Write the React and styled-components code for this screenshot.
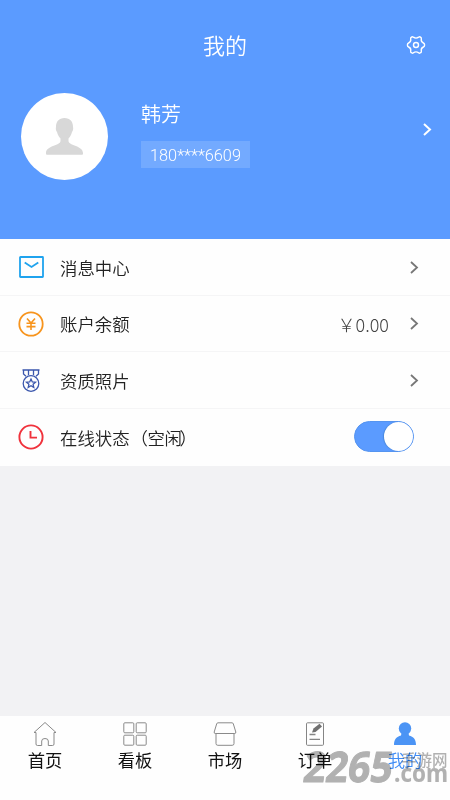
import React from "react";
import styled, { createGlobalStyle } from "styled-components";

const Global = createGlobalStyle`
  * { box-sizing: border-box; }
  body { margin: 0; background: #f2f2f4; }
`;

const Page = styled.div`
  position: relative;
  width: 450px;
  height: 800px;
  overflow: hidden;
  display: flex;
  flex-direction: column;
  background: #f2f2f4;
  color: #222;
  font-family: "Noto Sans CJK SC", sans-serif;
  font-weight: 350;
`;

const Hero = styled.header`
  height: 239px;
  background: #5b9bff;
  color: #fff;
`;

const TitleBar = styled.div`
  height: 93px;
  padding: 0 24px;
  display: grid;
  grid-template-columns: 20px 1fr 20px;
  align-items: center;
  & > svg { grid-column: 3; margin-top: -3px; }
`;

const Title = styled.h1`
  grid-column: 2;
  margin: -5px 0 0;
  text-align: center;
  font-size: 22px;
  font-weight: 350;
  line-height: 30px;
`;

const Profile = styled.div`
  display: flex;
  align-items: flex-start;
  padding: 0 19px 0 21px;
`;

const Avatar = styled.div`
  width: 87px;
  height: 87px;
  border-radius: 50%;
  background: #fff;
  display: flex;
  align-items: center;
  justify-content: center;
`;

const Identity = styled.div`
  flex: 1;
  margin-left: 33px;
  padding-top: 6px;
  display: flex;
  flex-direction: column;
  align-items: flex-start;
`;

const Name = styled.div`
  font-size: 20px;
  line-height: 30px;
`;

const Phone = styled.div`
  width: 109px;
  height: 27px;
  margin-top: 12px;
  background: #73aaff;
  text-align: center;
  font-family: Roboto, sans-serif;
  font-weight: 350;
  font-size: 16.3px;
  line-height: 30px;
`;

const HeroArrow = styled.div`
  padding-top: 30px;
  display: flex;
`;

const Menu = styled.main`
  background: #fefefe;
  height: 227px;
`;

const Row = styled.div`
  height: 56.6px;
  display: flex;
  align-items: center;
  padding: 1px 32px 0 18px;
  border-bottom: 1px solid ${(p) => (p.$last ? "transparent" : "#f5f5f6")};
`;

const IconSlot = styled.span`
  width: 26px;
  display: flex;
  justify-content: center;
`;

const Label = styled.span`
  flex: 1;
  margin-left: 16px;
  font-size: 17.4px;
  line-height: 26px;
  padding-top: 1px;
`;

const Note = styled.span`
  margin-left: 1px;
  letter-spacing: -0.4px;
`;

const NoteEnd = styled.span`
  margin-left: -2px;
`;

const Amount = styled.span`
  margin-right: 21px;
  font-size: 18px;
  font-weight: 300;
  line-height: 26px;
  color: #444;
`;

const Switch = styled.span`
  width: 60px;
  height: 31px;
  margin: -2px 4px 0 0;
  border-radius: 16px;
  background: #5b9bff;
  border: 1px solid #5594f0;
  display: flex;
  justify-content: flex-end;
`;

const Knob = styled.span`
  width: 29px;
  height: 29px;
  border-radius: 50%;
  background: #fff;
  box-shadow: -1px 0 1px #4a88de;
`;

const TabBar = styled.nav`
  margin-top: auto;
  height: 84px;
  background: #fefefe;
  display: grid;
  grid-template-columns: repeat(5, 1fr);
`;

const Tab = styled.div`
  display: flex;
  flex-direction: column;
  align-items: center;
  padding-top: 5px;
  color: ${(p) => (p.$active ? "#3f8cf5" : "#111")};
  font-size: 17.3px;
  font-weight: ${(p) => (p.$active ? 350 : 400)};
  line-height: 25px;
`;

const Watermark = styled.svg`
  position: absolute;
  left: 295px;
  top: 740px;
  pointer-events: none;
  mix-blend-mode: multiply;
`;

const Stroke = styled.svg`
  display: block;
  overflow: visible;
  fill: none;
  stroke: ${(p) => p.$color};
  stroke-width: ${(p) => p.$weight || 1};
`;

const Chevron = ({ color, weight = 1.8 }) => (
  <Stroke width="8" height="13" viewBox="0 0 8 13" $color={color} $weight={weight}>
    <path d="M1 1 L7 6.5 L1 12" />
  </Stroke>
);

const Gear = () => (
  <Stroke width="20" height="20" viewBox="0 0 20 20" $color="#fff" $weight={1.4} strokeLinejoin="round">
    <path d="M5.2 2.4 Q6.2 1.4 7.3 2.2 Q10 4 12.7 2.2 Q13.8 1.4 14.8 2.4 Q15.6 3 15.3 4.2 Q14.8 6.9 17.4 8 Q18.6 8.5 18.6 10 Q18.6 11.5 17.4 12 Q14.8 13.1 15.3 15.8 Q15.6 17 14.8 17.6 Q13.8 18.6 12.7 17.8 Q10 16 7.3 17.8 Q6.2 18.6 5.2 17.6 Q4.4 17 4.7 15.8 Q5.2 13.1 2.6 12 Q1.4 11.5 1.4 10 Q1.4 8.5 2.6 8 Q5.2 6.9 4.7 4.2 Q4.4 3 5.2 2.4 Z" />
    <circle cx="10" cy="10" r="2.5" />
  </Stroke>
);

const AvatarShape = () => (
  <svg width="37" height="37" viewBox="0 0 37 37" fill="#d8d8d8">
    <path d="M18.5 0 C13 0 9.8 3.8 10 9 C9.5 10.5 10 13 11 14 C11.7 17 13 19 14.5 20.5 V23 C14 28 0 27.5 0 35 V36 Q0 36.8 1 36.8 H36 Q37 36.8 37 36 V35 C37 27.5 23 28 22.5 23 V20.5 C24 19 25.3 17 26 14 C27 13 27.5 10.5 27 9 C27.2 3.8 24 0 18.5 0 Z" />
  </svg>
);

const Mail = () => (
  <Stroke width="25" height="22" viewBox="0 0 25 22" $color="#1fa3ee" $weight={1.8}>
    <rect x="1" y="1" width="23" height="20" rx=".5" />
    <path d="M5.7 6.5 L12.5 11 L19.3 6.5" />
  </Stroke>
);

const Coin = () => (
  <Stroke width="26" height="26" viewBox="0 0 26 26" $color="#f7941d" $weight={1.8}>
    <circle cx="13" cy="13" r="11.7" />
    <path d="M9 7.5 L13 12 L17 7.5 M13 12 V19 M8.5 12.3 H17.5 M8.5 15.6 H17.5" strokeWidth="1.6" />
  </Stroke>
);

const Medal = () => (
  <Stroke width="18" height="23" viewBox="0 0 18 23" $color="#3b57ad" $weight={1.3}>
    <path d="M.5 1 H17.5 M1.5 1 V5 L4 7.2 M16.5 1 V5 L14 7.2 M6.5 1 V6 M11.5 1 V6" />
    <circle cx="9" cy="14.5" r="7.8" />
    <path d="M9 10 L10.3 12.9 L13.5 13.2 L11.1 15.3 L11.8 18.4 L9 16.8 L6.2 18.4 L6.9 15.3 L4.5 13.2 L7.7 12.9 Z" />
  </Stroke>
);

const Clock = () => (
  <Stroke width="26" height="26" viewBox="0 0 26 26" $color="#f0323c" $weight={1.9}>
    <circle cx="13" cy="13" r="11.6" />
    <path d="M12.5 7 V13.6 H19" />
  </Stroke>
);

const Home = () => (
  <Stroke width="26" height="26" viewBox="0 0 26 26" $color="#8a8a8a">
    <path d="M4 11.5 H2 L13 1.5 L24 11.5 H22 V23 Q22 24.5 20.5 24.5 H16.3 V20 Q16.3 17.5 13 17.5 Q9.7 17.5 9.7 20 V24.5 H5.5 Q4 24.5 4 23 Z" />
  </Stroke>
);

const Grid = () => (
  <Stroke width="26" height="26" viewBox="0 0 26 26" $color="#8a8a8a">
    <rect x="1.8" y="1.8" width="10" height="10" rx="1" />
    <rect x="14.2" y="1.8" width="10" height="10" rx="1" />
    <rect x="1.8" y="14.2" width="10" height="10" rx="1" />
    <rect x="14.2" y="14.2" width="10" height="10" rx="1" />
  </Stroke>
);

const Shop = () => (
  <Stroke width="26" height="26" viewBox="0 0 26 26" $color="#8a8a8a">
    <path d="M6 1.8 H20 Q21 1.8 21.3 2.8 L23.8 11 Q24 12.5 22.8 12.5 H3.2 Q2 12.5 2.2 11 L4.7 2.8 Q5 1.8 6 1.8 Z M4 12.5 V22.5 Q4 24.3 5.8 24.3 H20.2 Q22 24.3 22 22.5 V12.5" />
  </Stroke>
);

const Order = () => (
  <Stroke width="26" height="26" viewBox="0 0 26 26" $color="#858585">
    <rect x="4.5" y="1.8" width="17" height="22.5" rx="1" />
    <path d="M7.5 13.5 H13.5 M7.5 18.3 H18" strokeWidth="1.3" />
    <path d="M10 11.5 L11.5 7.5 L17.5 2.8 L20 5.6 L13.5 11 Z" fill="#707070" stroke="none" />
  </Stroke>
);

const Person = () => (
  <svg width="26" height="26" viewBox="0 0 26 26" fill="#4b94f5">
    <circle cx="13" cy="7.5" r="6.2" />
    <path d="M9.5 12 H16.5 L17 14.5 C21.5 15.5 24 18.5 24 24 H2 C2 18.5 4.5 15.5 9 14.5 Z" />
  </svg>
);

const rows = [
  { label: "消息中心", icon: Mail },
  { label: "账户余额", icon: Coin, amount: "￥0.00" },
  { label: "资质照片", icon: Medal },
  { label: "在线状态", note: "空闲", icon: Clock, toggle: true },
];

const tabs = [
  { label: "首页", icon: Home },
  { label: "看板", icon: Grid },
  { label: "市场", icon: Shop },
  { label: "订单", icon: Order },
  { label: "我的", icon: Person, active: true },
];

export default function App() {
  return (
    <Page>
      <Global />
      <Hero>
        <TitleBar>
          <Title>我的</Title>
          <Gear />
        </TitleBar>
        <Profile>
          <Avatar><AvatarShape /></Avatar>
          <Identity>
            <Name>韩芳</Name>
            <Phone>180****6609</Phone>
          </Identity>
          <HeroArrow><Chevron color="#fff" weight={2} /></HeroArrow>
        </Profile>
      </Hero>
      <Menu>
        {rows.map(({ label, note, icon: Icon, amount, toggle }) => (
          <Row key={label} $last={toggle}>
            <IconSlot><Icon /></IconSlot>
            <Label>
              {label}
              {note && <Note>（{note}<NoteEnd>）</NoteEnd></Note>}
            </Label>
            {amount && <Amount>{amount}</Amount>}
            {toggle ? <Switch><Knob /></Switch> : <Chevron color="#777" />}
          </Row>
        ))}
      </Menu>
      <TabBar>
        {tabs.map(({ label, icon: Icon, active }) => (
          <Tab key={label} $active={active}>
            <Icon />
            {label}
          </Tab>
        ))}
      </TabBar>
      <Watermark width="155" height="50" viewBox="0 0 155 50" fill="#b2b2b2" stroke="#b2b2b2" strokeLinejoin="round" fontFamily="Open Sans, Liberation Sans, sans-serif" fontWeight="700">
        <text transform="translate(7 42) skewX(-8)" fontSize="42" strokeWidth="1" textLength="89" lengthAdjust="spacingAndGlyphs">2265</text>
        <text x="99" y="42" fontSize="25" strokeWidth=".2" textLength="54" lengthAdjust="spacingAndGlyphs">.com</text>
        <text x="106" y="26" fontSize="15.5" fontFamily="Noto Sans CJK SC, sans-serif" fontWeight="500" stroke="none">手游网</text>
      </Watermark>
    </Page>
  );
}
